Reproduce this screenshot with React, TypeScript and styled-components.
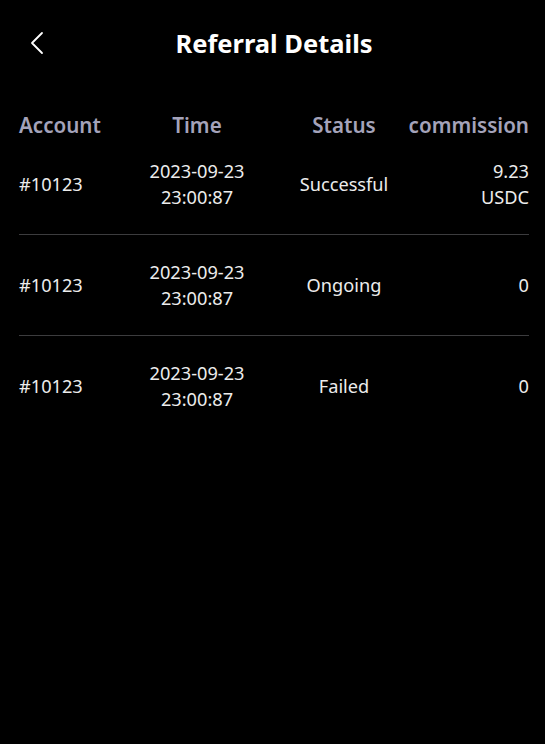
import * as React from 'react';
import styled, { createGlobalStyle } from 'styled-components';

const GlobalStyle = createGlobalStyle`
  html, body {
    margin: 0;
    padding: 0;
    background: #000;
  }
  body {
    font-family: 'Noto Sans', 'Open Sans', sans-serif;
    color: #ececec;
  }
`;

const Page = styled.div`
  min-height: 744px;
  background: #000;
  padding: 0 16px 0 19px;
  box-sizing: border-box;
`;

const NavBar = styled.div`
  position: relative;
  height: 86px;
  display: flex;
  align-items: center;
  justify-content: center;
`;

const BackButton = styled.button`
  position: absolute;
  left: 8px;
  top: 30px;
  width: 20px;
  height: 26px;
  padding: 0;
  border: none;
  background: transparent;
  display: flex;
  align-items: center;
  justify-content: center;
  cursor: pointer;
`;

const Title = styled.h1`
  margin: 0;
  font-size: 25.5px;
  font-weight: 700;
  color: #fff;
`;

const Table = styled.div`
  margin-top: 24px;
`;

const Grid = styled.div`
  display: grid;
  grid-template-columns: 100px 156px 138px minmax(0, 1fr);
  align-items: center;
`;

const HeadRow = styled(Grid)`
  height: 30px;
`;

type Align = 'left' | 'center' | 'right';

const alignSelf = (a: Align) => (a === 'left' ? 'start' : a === 'right' ? 'end' : 'center');

const HeadCell = styled.div<{ $align: Align }>`
  font-size: 20.6px;
  font-weight: 600;
  color: #a4a3ba;
  text-align: ${p => p.$align};
  justify-self: ${p => alignSelf(p.$align)};
  white-space: nowrap;
`;

const Row = styled(Grid)<{ $first?: boolean }>`
  padding: ${p => (p.$first ? '18px' : '24px')} 0 24px;
  border-bottom: 1px solid #3c3c3e;
`;

const LastRow = styled(Row)`
  border-bottom: none;
`;

const Cell = styled.div<{ $align: Align }>`
  font-size: 18.2px;
  line-height: 26px;
  font-weight: 400;
  color: #ececec;
  text-align: ${p => p.$align};
  justify-self: ${p => alignSelf(p.$align)};
  white-space: nowrap;
`;

interface IRecord {
  account: string;
  date: string;
  time: string;
  status: string;
  commission: string[];
}

const records: IRecord[] = [
  { account: '#10123', date: '2023-09-23', time: '23:00:87', status: 'Successful', commission: ['9.23', 'USDC'] },
  { account: '#10123', date: '2023-09-23', time: '23:00:87', status: 'Ongoing', commission: ['0'] },
  { account: '#10123', date: '2023-09-23', time: '23:00:87', status: 'Failed', commission: ['0'] },
];

const ChevronLeft = () => (
  <svg width="14" height="24" viewBox="0 0 14 24" fill="none">
    <path d="M12 2 L2 12 L12 22" stroke="#fff" strokeWidth="1.8" strokeLinecap="round" strokeLinejoin="round" />
  </svg>
);

export default function App() {
  return (
    <Page>
      <GlobalStyle />
      <NavBar>
        <BackButton aria-label="Back">
          <ChevronLeft />
        </BackButton>
        <Title>Referral Details</Title>
      </NavBar>
      <Table>
        <HeadRow>
          <HeadCell $align="left">Account</HeadCell>
          <HeadCell $align="center">Time</HeadCell>
          <HeadCell $align="center">Status</HeadCell>
          <HeadCell $align="right">commission</HeadCell>
        </HeadRow>
        {records.map((r, i) => {
          const RowComp = i === records.length - 1 ? LastRow : Row;
          return (
            <RowComp key={i} $first={i === 0}>
              <Cell $align="left">{r.account}</Cell>
              <Cell $align="center">
                {r.date}
                <br />
                {r.time}
              </Cell>
              <Cell $align="center">{r.status}</Cell>
              <Cell $align="right">
                {r.commission.map((c, j) => (
                  <React.Fragment key={j}>
                    {j > 0 && <br />}
                    {c}
                  </React.Fragment>
                ))}
              </Cell>
            </RowComp>
          );
        })}
      </Table>
    </Page>
  );
}
